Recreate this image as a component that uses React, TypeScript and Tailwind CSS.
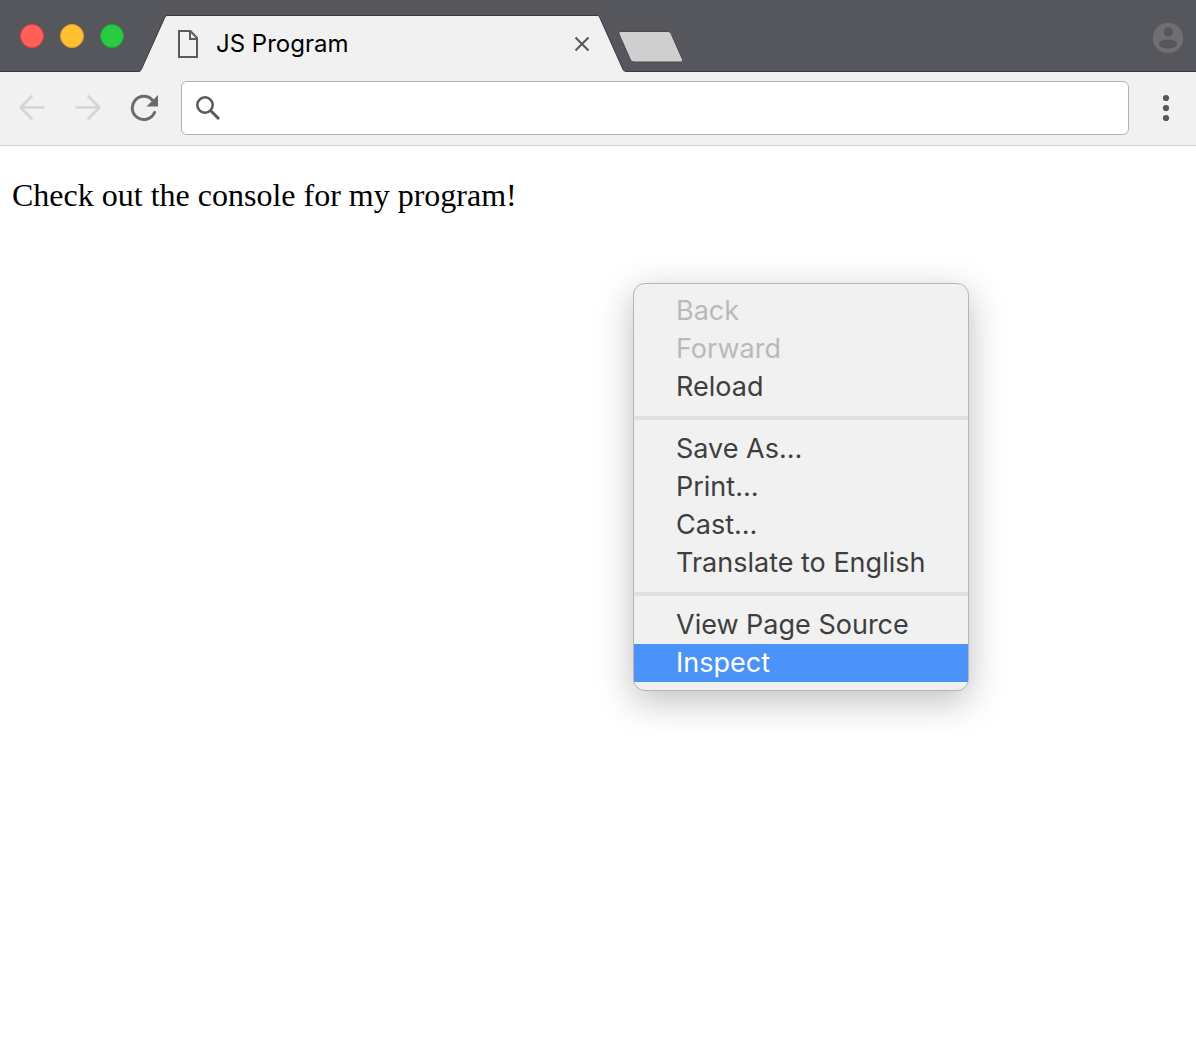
import React from "react";

type MenuItem = { label: string; disabled?: boolean; active?: boolean };

const menuGroups: MenuItem[][] = [
  [{ label: "Back", disabled: true }, { label: "Forward", disabled: true }, { label: "Reload" }],
  [{ label: "Save As…" }, { label: "Print…" }, { label: "Cast…" }, { label: "Translate to English" }],
  [{ label: "View Page Source" }, { label: "Inspect", active: true }],
];

function WindowControls() {
  return (
    <div className="flex h-full w-[139px] shrink-0 items-center gap-4 border-b border-[#3c3a3f] pl-5">
      <button aria-label="Close window" className="size-6 rounded-full border border-[#e2463f] bg-[#ff5f57]" />
      <button aria-label="Minimize window" className="size-6 rounded-full border border-[#e1a32d] bg-[#ffc02f]" />
      <button aria-label="Zoom window" className="size-6 rounded-full border border-[#1dad2b] bg-[#2acb42]" />
    </div>
  );
}

function Tab() {
  return (
    <div className="flex h-[57px] w-[487px] min-w-0 self-end">
      <svg className="h-[57px] w-7 shrink-0" viewBox="0 0 28 57" aria-hidden="true">
        <path d="M0 57V56.5Q1.500 56.5 2.300 54.5L26 2Q26.7.5 28 .5V57Z" fill="#f1f1f1" />
        <path d="M0 56.5Q1.500 56.5 2.300 54.5L26 2Q26.7.5 28 .5" fill="none" stroke="#3c3a3f" />
      </svg>
      <div className="flex min-w-0 flex-1 items-center border-t border-[#3c3a3f] bg-[#f1f1f1] pl-[11px] pr-1.5">
        <svg className="h-7 w-5 shrink-0" viewBox="0 0 20 28" fill="none" stroke="#5b5b5b" strokeWidth="2" aria-hidden="true">
          <path d="M1 1H12.5L19 8V27H1ZM12 1V9H19" />
        </svg>
        <span className="ml-[18px] flex-1 truncate text-2xl text-black">JS Program</span>
        <button aria-label="Close tab" className="flex size-5 items-center justify-center">
          <svg className="size-4" viewBox="0 0 16 16" stroke="#5b5b5b" strokeWidth="2.2" aria-hidden="true">
            <path d="M1.5 1.5L14.5 14.5M14.5 1.5L1.5 14.5" />
          </svg>
        </button>
      </div>
      <svg className="h-[57px] w-7 shrink-0" viewBox="0 0 28 57" aria-hidden="true">
        <path d="M28 57V56.5Q26 56.5 25 54.5L1.500 2Q.8.5 0 .5V57Z" fill="#f1f1f1" />
        <path d="M28 56.5Q26 56.5 25 54.5L1.500 2Q.8.5 0 .5" fill="none" stroke="#3c3a3f" />
      </svg>
    </div>
  );
}

function TitleBar() {
  return (
    <header className="flex h-[72px] bg-[#56575d]">
      <WindowControls />
      <Tab />
      <div className="flex flex-1 items-center justify-between border-b border-[#3c3a3f] pr-3">
        <button aria-label="New tab" className="-ml-[9px] mt-5">
          <svg className="h-[34px] w-[68px]" viewBox="0 0 68 34" aria-hidden="true">
            <path
              d="M3.5 2.5H51Q53 2.5 54 4.5L65.500 30.500Q66.500 33 64 33H17Q14.500 33 13.500 31L2 5Q1 2.500 3.500 2.500Z"
              fill="#cfcfcf"
              stroke="#48484d"
            />
          </svg>
        </button>
        <button aria-label="Profile" className="mt-1">
          <svg className="size-8" viewBox="0 0 32 32" aria-hidden="true">
            <circle cx="16" cy="16" r="15.200" fill="#6f6f6f" />
            <circle cx="16.300" cy="10" r="4.700" fill="#56575d" />
            <ellipse cx="16" cy="22" rx="9.200" ry="4.500" fill="#56575d" />
          </svg>
        </button>
      </div>
    </header>
  );
}

function Toolbar() {
  return (
    <nav className="flex h-[74px] items-center border-b border-[#d2d2d2] bg-[#f1f1f1] pb-px pl-[18px] pr-4">
      <div className="flex shrink-0 gap-7">
        <button aria-label="Back" disabled>
          <svg className="size-7" viewBox="0 0 28 28" fill="none" stroke="#d5d5d5" strokeWidth="2.600" strokeLinecap="round" strokeLinejoin="round" aria-hidden="true">
            <path d="M25.500 13.500H2.500M13.500 2.500L2.500 13.500L13.500 24.500" />
          </svg>
        </button>
        <button aria-label="Forward" disabled>
          <svg className="size-7" viewBox="0 0 28 28" fill="none" stroke="#d5d5d5" strokeWidth="2.600" strokeLinecap="round" strokeLinejoin="round" aria-hidden="true">
            <path d="M2.500 13.500H25.500M14.500 2.500L25.500 13.500L14.500 24.500" />
          </svg>
        </button>
        <button aria-label="Reload">
          <svg className="size-7" viewBox="0 0 28 28" aria-hidden="true">
            <path d="M24.500 18.500A11.600 11.600 0 1 1 22.500 6.200" fill="none" stroke="#6b6b6b" strokeWidth="3" strokeLinecap="round" />
            <path d="M28 1V12.500H16.500Z" fill="#6b6b6b" />
          </svg>
        </button>
      </div>
      <label className="ml-[23px] flex h-[54px] min-w-0 flex-1 items-center rounded-md border border-[#b2b2b2] bg-white pl-3.5 pr-3">
        <svg className="size-6 shrink-0" viewBox="0 0 24 24" fill="none" stroke="#585858" aria-hidden="true">
          <circle cx="9" cy="9" r="7.700" strokeWidth="2.500" />
          <path d="M14.800 14.800L23 23" strokeWidth="3" />
        </svg>
        <input aria-label="Address and search bar" className="ml-3 h-full min-w-0 flex-1 text-2xl outline-none" />
      </label>
      <button aria-label="Browser menu" className="ml-[23px]">
        <svg className="size-7" viewBox="0 0 28 28" fill="#585858" aria-hidden="true">
          <circle cx="14" cy="4" r="3.100" />
          <circle cx="14" cy="14" r="3.100" />
          <circle cx="14" cy="24" r="3.100" />
        </svg>
      </button>
    </nav>
  );
}

function ContextMenu() {
  return (
    <div
      role="menu"
      className="absolute left-[633px] top-[283px] w-[336px] rounded-xl border border-[#b5b5b5] bg-[#f1f1f1] py-2 shadow-[0_10px_36px_rgba(0,0,0,0.26)]"
    >
      {menuGroups.map((group, index) => (
        <React.Fragment key={group[0].label}>
          {index > 0 && <hr className="my-2.5 h-1 border-0 bg-[#e0e0e0]" />}
          {group.map((item) => (
            <button
              key={item.label}
              role="menuitem"
              disabled={item.disabled}
              className={
                "block h-[38px] w-full whitespace-nowrap pl-[42px] text-left text-[27px] leading-[38px] " +
                (item.active ? "bg-[#4b93f8] text-white" : item.disabled ? "text-[#b9b9b9]" : "text-[#3e3e3e]")
              }
            >
              {item.label}
            </button>
          ))}
        </React.Fragment>
      ))}
    </div>
  );
}

export default function App() {
  return (
    <div className="relative flex min-h-screen flex-col bg-white font-['Inter',sans-serif]">
      <TitleBar />
      <Toolbar />
      <main className="flex-1 px-3 py-[31px]">
        <p className="font-['Liberation_Serif',serif] text-[32px] leading-9 text-black">
          Check out the console for my program!
        </p>
      </main>
      <ContextMenu />
    </div>
  );
}
